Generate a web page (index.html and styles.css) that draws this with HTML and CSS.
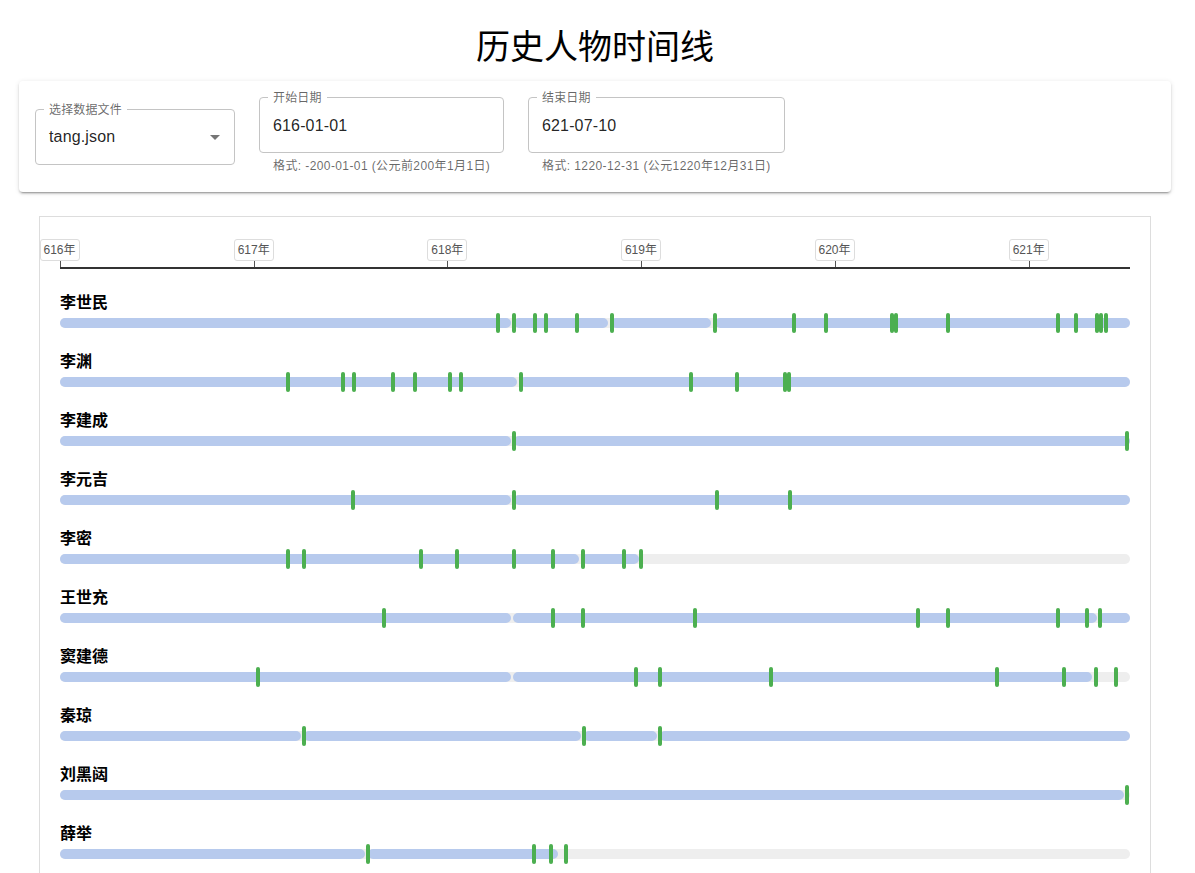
FILE: index.html
```html
<!DOCTYPE html>
<html lang="zh">
<head>
<meta charset="utf-8">
<title>历史人物时间线</title>
<link rel="stylesheet" href="styles.css">
</head>
<body>
<div class="page">
  <h1 class="title">历史人物时间线</h1>

  <div class="card">
    <div class="field select-field">
      <span class="field-label">选择数据文件</span>
      <div class="outline">
        <span class="value">tang.json</span>
        <svg class="arrow" viewBox="0 0 24 24" width="24" height="24"><path d="M7 10l5 5 5-5z"/></svg>
      </div>
    </div>

    <div class="date-group date-start">
      <div class="field">
        <span class="field-label">开始日期</span>
        <div class="outline"><span class="value">616-01-01</span></div>
      </div>
      <div class="helper">格式: -200-01-01 (公元前200年1月1日)</div>
    </div>

    <div class="date-group date-end">
      <div class="field">
        <span class="field-label">结束日期</span>
        <div class="outline"><span class="value">621-07-10</span></div>
      </div>
      <div class="helper">格式: 1220-12-31 (公元1220年12月31日)</div>
    </div>
  </div>

  <div class="timeline">
    <div class="axis">
      <div class="tick" style="left:0px"><span class="year">616年</span></div>
      <div class="tick" style="left:194.2px"><span class="year">617年</span></div>
      <div class="tick" style="left:387.8px"><span class="year">618年</span></div>
      <div class="tick" style="left:581.4px"><span class="year">619年</span></div>
      <div class="tick" style="left:775px"><span class="year">620年</span></div>
      <div class="tick" style="left:969.2px"><span class="year">621年</span></div>
    </div>

    <div class="rows">
      <div class="row">
        <div class="name">李世民</div>
        <div class="track">
          <div class="seg" style="left:0px;width:451px"></div>
          <div class="seg" style="left:454px;width:94px"></div>
          <div class="seg" style="left:551px;width:100px"></div>
          <div class="seg" style="left:655px;width:415px"></div>
          <div class="mark" style="left:436px"></div>
          <div class="mark" style="left:452px"></div>
          <div class="mark" style="left:473px"></div>
          <div class="mark" style="left:484px"></div>
          <div class="mark" style="left:515px"></div>
          <div class="mark" style="left:550px"></div>
          <div class="mark" style="left:653px"></div>
          <div class="mark" style="left:732px"></div>
          <div class="mark" style="left:764px"></div>
          <div class="mark" style="left:830px"></div>
          <div class="mark" style="left:834px"></div>
          <div class="mark" style="left:886px"></div>
          <div class="mark" style="left:996px"></div>
          <div class="mark" style="left:1014px"></div>
          <div class="mark" style="left:1035px"></div>
          <div class="mark" style="left:1039px"></div>
          <div class="mark" style="left:1044px"></div>
        </div>
      </div>

      <div class="row">
        <div class="name">李渊</div>
        <div class="track">
          <div class="seg" style="left:0px;width:457px"></div>
          <div class="seg" style="left:460px;width:610px"></div>
          <div class="mark" style="left:226px"></div>
          <div class="mark" style="left:281px"></div>
          <div class="mark" style="left:292px"></div>
          <div class="mark" style="left:331px"></div>
          <div class="mark" style="left:353px"></div>
          <div class="mark" style="left:388px"></div>
          <div class="mark" style="left:399px"></div>
          <div class="mark" style="left:459px"></div>
          <div class="mark" style="left:629px"></div>
          <div class="mark" style="left:675px"></div>
          <div class="mark" style="left:723px"></div>
          <div class="mark" style="left:727px"></div>
        </div>
      </div>

      <div class="row">
        <div class="name">李建成</div>
        <div class="track">
          <div class="seg" style="left:0px;width:451px"></div>
          <div class="seg" style="left:454px;width:616px"></div>
          <div class="mark" style="left:452px"></div>
          <div class="mark" style="left:1065px"></div>
        </div>
      </div>

      <div class="row">
        <div class="name">李元吉</div>
        <div class="track">
          <div class="seg" style="left:0px;width:451px"></div>
          <div class="seg" style="left:454px;width:616px"></div>
          <div class="mark" style="left:291px"></div>
          <div class="mark" style="left:452px"></div>
          <div class="mark" style="left:655px"></div>
          <div class="mark" style="left:728px"></div>
        </div>
      </div>

      <div class="row">
        <div class="name">李密</div>
        <div class="track">
          <div class="seg" style="left:0px;width:519px"></div>
          <div class="seg" style="left:522px;width:57px"></div>
          <div class="mark" style="left:226px"></div>
          <div class="mark" style="left:242px"></div>
          <div class="mark" style="left:359px"></div>
          <div class="mark" style="left:395px"></div>
          <div class="mark" style="left:452px"></div>
          <div class="mark" style="left:491px"></div>
          <div class="mark" style="left:521px"></div>
          <div class="mark" style="left:562px"></div>
          <div class="mark" style="left:579px"></div>
        </div>
      </div>

      <div class="row">
        <div class="name">王世充</div>
        <div class="track">
          <div class="seg" style="left:0px;width:451px"></div>
          <div class="seg" style="left:453px;width:584px"></div>
          <div class="seg" style="left:1039px;width:31px"></div>
          <div class="mark" style="left:322px"></div>
          <div class="mark" style="left:491px"></div>
          <div class="mark" style="left:521px"></div>
          <div class="mark" style="left:633px"></div>
          <div class="mark" style="left:856px"></div>
          <div class="mark" style="left:886px"></div>
          <div class="mark" style="left:996px"></div>
          <div class="mark" style="left:1025px"></div>
          <div class="mark" style="left:1038px"></div>
        </div>
      </div>

      <div class="row">
        <div class="name">窦建德</div>
        <div class="track">
          <div class="seg" style="left:0px;width:451px"></div>
          <div class="seg" style="left:453px;width:579px"></div>
          <div class="mark" style="left:196px"></div>
          <div class="mark" style="left:574px"></div>
          <div class="mark" style="left:598px"></div>
          <div class="mark" style="left:709px"></div>
          <div class="mark" style="left:935px"></div>
          <div class="mark" style="left:1002px"></div>
          <div class="mark" style="left:1034px"></div>
          <div class="mark" style="left:1054px"></div>
        </div>
      </div>

      <div class="row">
        <div class="name">秦琼</div>
        <div class="track">
          <div class="seg" style="left:0px;width:241px"></div>
          <div class="seg" style="left:244px;width:277px"></div>
          <div class="seg" style="left:524px;width:73px"></div>
          <div class="seg" style="left:600px;width:470px"></div>
          <div class="mark" style="left:242px"></div>
          <div class="mark" style="left:522px"></div>
          <div class="mark" style="left:598px"></div>
        </div>
      </div>

      <div class="row">
        <div class="name">刘黑闼</div>
        <div class="track">
          <div class="seg" style="left:0px;width:1064px"></div>
          <div class="mark" style="left:1065px"></div>
        </div>
      </div>

      <div class="row">
        <div class="name">薛举</div>
        <div class="track">
          <div class="seg" style="left:0px;width:305px"></div>
          <div class="seg" style="left:308px;width:190px"></div>
          <div class="mark" style="left:306px"></div>
          <div class="mark" style="left:472px"></div>
          <div class="mark" style="left:489px"></div>
          <div class="mark" style="left:504px"></div>
        </div>
      </div>
    </div>
  </div>
</div>
</body>
</html>
```

FILE: styles.css
```css
* {
  box-sizing: border-box;
}

html, body {
  margin: 0;
  padding: 0;
  background: #fff;
}

body {
  font-family: "Liberation Sans", "Noto Sans CJK SC", sans-serif;
  color: rgba(0, 0, 0, 0.87);
}

.page {
  padding: 0 24px 0 19px;
}

.title {
  margin: 25px 0 16px;
  height: 40px;
  line-height: 40px;
  font-size: 34px;
  font-weight: 400;
  text-align: center;
  color: #000;
  font-family: "Noto Sans CJK SC", "Liberation Sans", sans-serif;
}

/* ---------- controls card ---------- */
.card {
  width: 1152px;
  background: #fff;
  border-radius: 4px;
  box-shadow: 0 3px 1px -2px rgba(0, 0, 0, 0.2), 0 2px 2px 0 rgba(0, 0, 0, 0.14), 0 1px 5px 0 rgba(0, 0, 0, 0.12);
  padding: 16px;
  display: flex;
  align-items: center;
  gap: 24px;
}

.field {
  position: relative;
}

.outline {
  height: 56px;
  border: 1px solid #c4c4c4;
  border-radius: 4px;
  display: flex;
  align-items: center;
  padding: 0 14px 0 13px;
}

.value {
  font-size: 16px;
  line-height: 23px;
  letter-spacing: 0.15px;
  color: rgba(0, 0, 0, 0.87);
}

.field-label {
  position: absolute;
  top: -7px;
  left: 9px;
  padding: 0 5px;
  background: #fff;
  font-size: 12px;
  line-height: 14px;
  letter-spacing: 0.15px;
  color: rgba(0, 0, 0, 0.6);
  font-family: "Noto Sans CJK SC", sans-serif;
}

.select-field {
  width: 200px;
}

.select-field .outline {
  justify-content: space-between;
  padding-right: 7px;
}

.arrow {
  fill: rgba(0, 0, 0, 0.54);
}

.date-group {
  display: flex;
  flex-direction: column;
}

.date-start {
  width: 245px;
}

.date-end {
  width: 257px;
}

.helper {
  margin: 3px 14px 0;
  font-size: 12px;
  line-height: 20px;
  letter-spacing: 0.4px;
  color: rgba(0, 0, 0, 0.6);
  white-space: nowrap;
}

/* ---------- timeline ---------- */
.timeline {
  margin: 24px 20px 0;
  border: 1px solid #ddd;
  padding: 20px 20px 24px;
}

.axis {
  position: relative;
  height: 32px;
  border-bottom: 2px solid #333;
}

.tick {
  position: absolute;
  bottom: 0;
  width: 1px;
  height: 6px;
  margin-left: -0.5px;
  background: #555;
}

.year {
  position: absolute;
  bottom: 6px;
  left: 0;
  transform: translateX(-50%);
  white-space: nowrap;
  font-size: 12px;
  line-height: 16px;
  padding: 2px 3px;
  color: #555;
  background: #fff;
  border: 1px solid #ddd;
  border-radius: 3px;
}

.rows {
  margin-top: 24px;
}

.row {
  margin-bottom: 19px;
}

.name {
  height: 20px;
  line-height: 17px;
  padding-bottom: 3px;
  font-size: 16px;
  font-weight: 700;
  color: #000;
  font-family: "Noto Sans CJK SC", sans-serif;
}

.track {
  position: relative;
  height: 20px;
}

.track::before {
  content: "";
  position: absolute;
  left: 0;
  right: 0;
  top: 5px;
  height: 10px;
  border-radius: 5px;
  background: #eeeeee;
}

.seg {
  position: absolute;
  top: 5px;
  height: 10px;
  border-radius: 5px;
  background: #b7caed;
}

.mark {
  position: absolute;
  top: 0;
  width: 4px;
  height: 20px;
  border-radius: 2px;
  background: #4caf50;
}
```
